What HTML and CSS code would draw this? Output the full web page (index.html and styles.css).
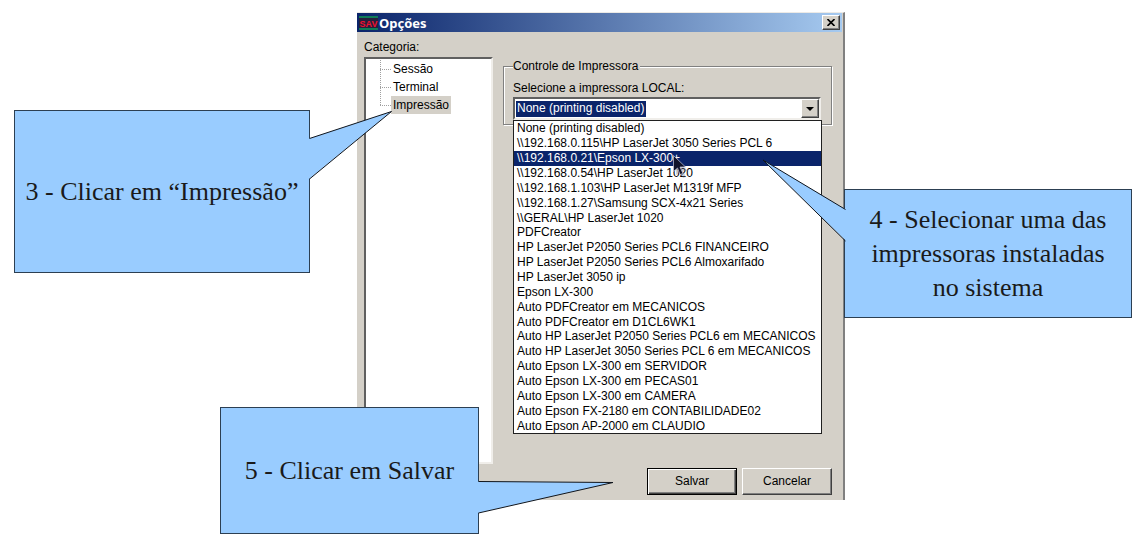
FILE: index.html
```html
<!DOCTYPE html>
<html lang="pt-BR">
<head>
<meta charset="utf-8">
<title>Opções</title>
<link rel="stylesheet" href="styles.css">
</head>
<body>
<main class="page">
  <section class="dialog" aria-label="Opções">
    <header class="titlebar">
      <svg class="logo" width="19" height="14" viewBox="0 0 19 14" role="img" aria-label="SAV">
        <rect width="19" height="14" fill="#26203c"/>
        <path d="M0 1h19M0 13h19" stroke="#089a60" stroke-width="1.500"/>
        <text class="logo-text" x="9.5" y="10.500" text-anchor="middle">SAV</text>
      </svg>
      <h1 class="title">Opções</h1>
      <button class="close" type="button" aria-label="Fechar">
        <svg width="8" height="7" viewBox="0 0 8 7"><path d="M.5 0 7.5 7M7.5 0 .5 7" stroke="#000" stroke-width="1.6"/></svg>
      </button>
    </header>

    <div class="content">
      <nav class="category">
        <h2 class="label" id="cat">Categoria:</h2>
        <ul class="tree" aria-labelledby="cat">
          <li class="node"><span class="node-text">Sessão</span></li>
          <li class="node"><span class="node-text">Terminal</span></li>
          <li class="node"><span class="node-text selected">Impressão</span></li>
        </ul>
      </nav>

      <div class="panel">
        <fieldset class="group">
          <legend class="legend">Controle de Impressora</legend>
          <label class="label" for="printer">Selecione a impressora LOCAL:</label>
          <div class="combo">
            <select class="combo-value" id="printer"><option>None (printing disabled)</option></select>
            <button class="combo-button" type="button" aria-label="Abrir lista">
              <svg width="8" height="4" viewBox="0 0 8 4"><path d="M0 0h8L4 4z"/></svg>
            </button>
            <ul class="list" role="listbox" aria-label="Impressoras">
              <li class="item" role="option">None (printing disabled)</li>
              <li class="item" role="option">\\192.168.0.115\HP LaserJet 3050 Series PCL 6</li>
              <li class="item active" role="option" aria-selected="true">\\192.168.0.21\Epson LX-300+</li>
              <li class="item" role="option">\\192.168.0.54\HP LaserJet 1020</li>
              <li class="item" role="option">\\192.168.1.103\HP LaserJet M1319f MFP</li>
              <li class="item" role="option">\\192.168.1.27\Samsung SCX-4x21 Series</li>
              <li class="item" role="option">\\GERAL\HP LaserJet 1020</li>
              <li class="item" role="option">PDFCreator</li>
              <li class="item" role="option">HP LaserJet P2050 Series PCL6 FINANCEIRO</li>
              <li class="item" role="option">HP LaserJet P2050 Series PCL6 Almoxarifado</li>
              <li class="item" role="option">HP LaserJet 3050 ip</li>
              <li class="item" role="option">Epson LX-300</li>
              <li class="item" role="option">Auto PDFCreator em MECANICOS</li>
              <li class="item" role="option">Auto PDFCreator em D1CL6WK1</li>
              <li class="item" role="option">Auto HP LaserJet P2050 Series PCL6 em MECANICOS</li>
              <li class="item" role="option">Auto HP LaserJet 3050 Series PCL 6 em MECANICOS</li>
              <li class="item" role="option">Auto Epson LX-300 em SERVIDOR</li>
              <li class="item" role="option">Auto Epson LX-300 em PECAS01</li>
              <li class="item" role="option">Auto Epson LX-300 em CAMERA</li>
              <li class="item" role="option">Auto Epson FX-2180 em CONTABILIDADE02</li>
              <li class="item" role="option">Auto Epson AP-2000 em CLAUDIO</li>
            </ul>
          </div>
        </fieldset>
      </div>
    </div>

    <footer class="actions">
      <button class="button default" type="button">Salvar</button>
      <button class="button" type="button">Cancelar</button>
    </footer>

    <svg class="cursor" width="16" height="24" viewBox="0 0 16 24">
      <path d="M3 4v16l4-3 3 6 3-1-3-6h5z" fill="#6d7390" opacity=".35"/>
      <path d="M.5.5v16l4-3.500 2.500 6.500 3-1-3-6.500h5.500z" fill="#10132b" stroke="#c9cde0" stroke-width=".7"/>
    </svg>

    <aside class="callout step-tree">
      <p class="callout-text">3 - Clicar em “Impressão”</p>
      <svg class="tail" width="84" height="70" viewBox="0 0 84 70">
        <path d="M0 27.500 82.500 .5 0 68z" fill="#99ccff"/>
        <path d="M.5 27.500 82.500 .5 .5 68" fill="none" stroke="#10151c"/>
      </svg>
    </aside>
    <aside class="callout step-list">
      <p class="callout-text">4 - Selecionar uma das impressoras instaladas no sistema</p>
      <svg class="tail" width="84" height="84" viewBox="0 0 84 84">
        <path d="M84 50.500 1 1l83 81z" fill="#99ccff"/>
        <path d="M83.500 50.500 1 1l82.500 81" fill="none" stroke="#10151c"/>
      </svg>
    </aside>
    <aside class="callout step-save">
      <p class="callout-text">5 - Clicar em Salvar</p>
      <svg class="tail" width="136" height="33" viewBox="0 0 136 33">
        <path d="M0 .5 135 1.500 0 32z" fill="#99ccff"/>
        <path d="M.5 .5 135 1.500 .5 32" fill="none" stroke="#10151c"/>
      </svg>
    </aside>
  </section>
</main>
</body>
</html>
```
FILE: styles.css
```css
* { box-sizing: border-box; }

body {
  margin: 0;
  background: #fff;
  color: #000;
  font: 12px/15px "Liberation Sans", Arial, sans-serif;
}

h1, h2, p, ul { margin: 0; padding: 0; font: inherit; }
ul { list-style: none; }
button, select { font: inherit; color: inherit; padding: 0; }

.page {
  display: grid;
  grid-template-columns: 357fr 488fr 297fr;
  padding: 12px 0 38px;
}

.dialog {
  grid-column: 2;
  position: relative;
  display: flex;
  flex-direction: column;
  background: #d4d0c8;
  border-right: 2px solid #808080;
  border-top: 1px solid #eceae6;
}

/* Title bar */
.titlebar {
  display: flex;
  align-items: center;
  height: 19px;
  padding: 0 2px;
  margin-right: 1px;
  background: linear-gradient(to right, #0a246a, #a6caf0);
}
.logo-text { font: bold 9px "Liberation Sans", Arial, sans-serif; fill: #f01030; }
.title {
  flex: 1;
  padding-left: 1px;
  color: #fff;
  font: bold 13px/16px "Noto Sans", sans-serif;
}
.close, .combo-button {
  display: flex;
  align-items: center;
  justify-content: center;
  width: 18px;
  background: #d4d0c8;
  border: 1px solid;
  border-color: #fff #404040 #404040 #fff;
  box-shadow: inset -1px -1px #808080;
}
.close { height: 15px; }

/* Body */
.content {
  display: grid;
  grid-template-columns: 129px 1fr;
  gap: 10px;
  padding: 8px 11px 0 7px;
}
.category { display: flex; flex-direction: column; gap: 2px; }
.tree {
  height: 407px;
  padding: 1px 0 0 14px;
  background: #fff;
  border: 2px solid;
  border-color: #606060 #f0eeea #f0eeea #606060;
}
.node {
  display: flex;
  align-items: center;
  height: 18px;
  background:
    linear-gradient(#fff, #fff) 1px 10px / 10px 8px no-repeat,
    repeating-linear-gradient(to right, #a0a0a0 0 1px, #fff 1px 2px) 0 9px / 11px 1px no-repeat,
    repeating-linear-gradient(#a0a0a0 0 1px, #fff 1px 2px) 0 0 / 1px 18px no-repeat;
}
.node:last-child {
  background:
    repeating-linear-gradient(to right, #a0a0a0 0 1px, #fff 1px 2px) 0 9px / 11px 1px no-repeat,
    repeating-linear-gradient(#a0a0a0 0 1px, #fff 1px 2px) 0 0 / 1px 10px no-repeat;
}
.node-text { margin-left: 11px; padding: 1px 2px; line-height: 16px; }
.selected { background: #d4d0c8; }

.panel { padding-top: 20px; }
.group {
  min-width: 0;
  margin: 0;
  padding: 9px 10px 4px 9px;
  border: 1px solid #808080;
  box-shadow: 1px 1px #fff, inset 1px 1px #fff;
}
.legend {
  height: 12px;
  padding: 0 2px 0 0;
  line-height: 12px;
  background: #d4d0c8;
}
.group .label { display: block; }
.combo {
  position: relative;
  display: flex;
  align-items: center;
  justify-content: space-between;
  height: 23px;
  margin-top: 1px;
  padding-left: 1px;
  background: #fff;
  border: 2px solid;
  border-color: #606060 #f0eeea #f0eeea #606060;
}
.combo-value {
  appearance: none;
  height: 16px;
  padding: 0 1px;
  color: #fff;
  background: #0a246a;
  border: 0;
  border-radius: 0;
}
.combo-button { height: 19px; }

/* Open list, laid over the panel */
.list {
  position: absolute;
  z-index: 1;
  top: 21px;
  left: -2px;
  right: -3px;
  display: flex;
  flex-direction: column;
  height: 314px;
  background: #fff;
  border: 1px solid #202020;
  line-height: 14px;
}
.item {
  flex: 1;
  display: flex;
  align-items: center;
  padding-left: 3px;
  white-space: nowrap;
}
.active { background: #0a246a; color: #fff; }

/* Buttons */
.actions {
  display: flex;
  justify-content: flex-end;
  gap: 5px;
  padding: 4px 11px 5px;
}
.button {
  width: 90px;
  height: 27px;
  background: #d4d0c8;
  border: 1px solid;
  border-color: #fff #404040 #404040 #fff;
  box-shadow: inset -1px -1px #808080;
}
.default {
  border-color: #000;
  box-shadow: inset 1px 1px #fff, inset -1px -1px #404040, inset -2px -2px #808080;
}

/* Pointer and step callouts float over the dialog */
.cursor { position: absolute; z-index: 2; left: 316px; top: 142px; }
.callout {
  position: absolute;
  z-index: 3;
  display: flex;
  align-items: center;
  justify-content: center;
  background: #99ccff;
  border: 1px solid #2c3f52;
  text-align: center;
}
.callout-text { font: 26px/34px "Liberation Serif", "Times New Roman", serif; color: #1a1a1a; }
.tail { position: absolute; }

.step-tree { left: -343px; top: 97px; width: 296px; height: 163px; }
.step-tree .tail { left: 294px; top: 0; }
.step-list { left: 487px; top: 176px; width: 288px; height: 129px; padding: 0 16px; }
.step-list .tail { right: 285px; top: -31px; }
.step-save { left: -137px; top: 394px; width: 259px; height: 127px; }
.step-save .tail { left: 257px; top: 73px; }
```
